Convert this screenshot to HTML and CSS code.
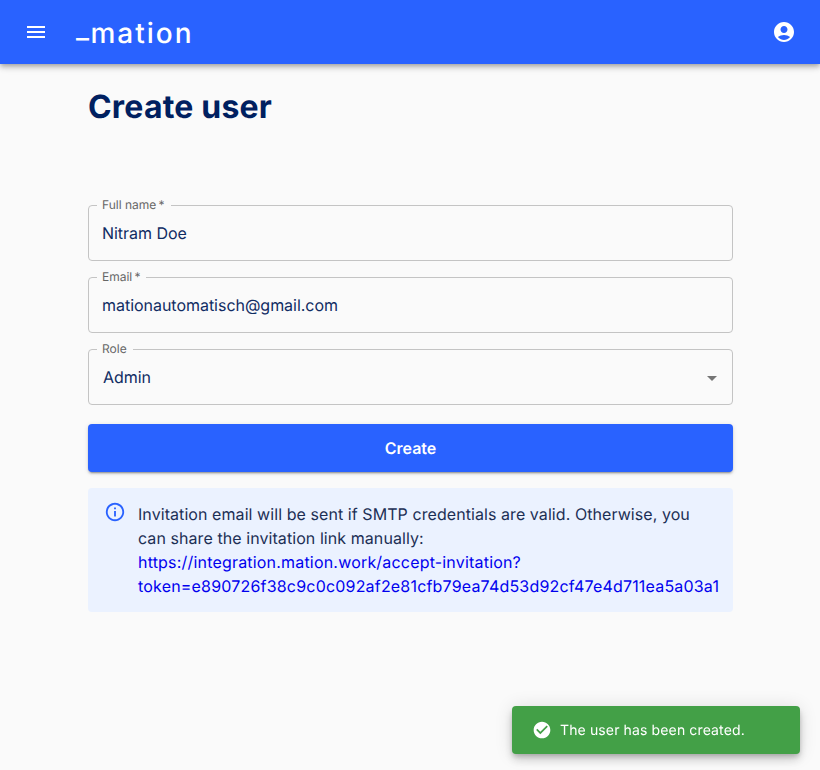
FILE: index.html
```html
<!DOCTYPE html>
<html lang="en">
<head>
    <meta charset="UTF-8">
    <title>Create user</title>
    <link rel="stylesheet" href="styles.css">
</head>
<body>
    <header class="topbar">
        <button class="icon-btn menu-btn" aria-label="Menu">
            <svg width="24" height="24" viewBox="0 0 24 24"><path d="M3 18h18v-2H3v2zm0-5h18v-2H3v2zm0-7v2h18V6H3z"/></svg>
        </button>
        <span class="logo"><span class="logo-bar">_</span>mation</span>
        <button class="icon-btn user-btn" aria-label="Account">
            <svg width="24" height="24" viewBox="0 0 24 24"><path d="M12 2C6.48 2 2 6.48 2 12s4.48 10 10 10 10-4.48 10-10S17.52 2 12 2zm0 4c1.93 0 3.5 1.57 3.5 3.5S13.93 13 12 13s-3.5-1.57-3.5-3.5S10.07 6 12 6zm0 14c-2.03 0-4.43-.82-6.14-2.88C7.55 15.8 9.68 15 12 15s4.45.8 6.14 2.12C16.43 19.18 14.03 20 12 20z"/></svg>
        </button>
    </header>

    <main class="content">
        <h1 class="title">Create user</h1>

        <form class="user-form">
            <fieldset class="field">
                <legend>Full name&thinsp;*</legend>
                <div class="value">Nitram Doe</div>
            </fieldset>
            <fieldset class="field">
                <legend>Email&thinsp;*</legend>
                <div class="value">mationautomatisch@gmail.com</div>
            </fieldset>
            <fieldset class="field select">
                <legend>Role</legend>
                <div class="value">Admin</div>
                <svg class="caret" width="24" height="24" viewBox="0 0 24 24"><path d="M7 10l5 5 5-5z"/></svg>
            </fieldset>
            <button type="button" class="submit">Create</button>
        </form>

        <div class="alert">
            <svg class="alert-icon" width="22" height="22" viewBox="0 0 24 24"><path d="M11 7h2v2h-2zm0 4h2v6h-2zm1-9C6.48 2 2 6.48 2 12s4.48 10 10 10 10-4.48 10-10S17.52 2 12 2zm0 18c-4.41 0-8-3.59-8-8s3.59-8 8-8 8 3.59 8 8-3.59 8-8 8z"/></svg>
            <div class="alert-text">
                Invitation email will be sent if SMTP credentials are valid. Otherwise, you can share the invitation link manually:
                <a href="#">https://integration.mation.work/accept-invitation?token=e890726f38c9c0c092af2e81cfb79ea74d53d92cf47e4d711ea5a03a1</a>
            </div>
        </div>
    </main>

    <div class="toast">
        <svg width="20" height="20" viewBox="0 0 24 24"><path d="M12 2C6.48 2 2 6.48 2 12s4.48 10 10 10 10-4.48 10-10S17.52 2 12 2zm-2 15l-5-5 1.41-1.41L10 14.17l7.59-7.59L19 8l-9 9z"/></svg>
        <span>The user has been created.</span>
    </div>
</body>
</html>
```

FILE: styles.css
```css
* {
    box-sizing: border-box;
}
body {
    margin: 0;
    height: 770px;
    overflow: hidden;
    background: #fafafa;
    font-family: Inter, "Liberation Sans", sans-serif;
    color: #002060;
    text-rendering: geometricPrecision;
}
.topbar {
    display: flex;
    align-items: center;
    height: 64px;
    padding: 0 24px;
    background: #2962ff;
    color: #fff;
    box-shadow: 0 2px 4px -1px rgba(0,0,0,.2), 0 4px 5px rgba(0,0,0,.14), 0 1px 10px rgba(0,0,0,.12);
}
.icon-btn {
    display: flex;
    padding: 0;
    border: none;
    background: none;
    fill: #fff;
}
.logo {
    margin: 0 0 3px 28px;
    font-size: 28px;
    font-weight: 500;
    line-height: 36px;
    letter-spacing: 2px;
}
.logo-bar {
    vertical-align: 5px;
    letter-spacing: 1.5px;
}
.user-btn {
    margin-left: auto;
}
.content {
    width: 645px;
    margin-left: 88px;
}
.title {
    margin: 23px 0 0;
    font-size: 32px;
    line-height: 40px;
    font-weight: 700;
    letter-spacing: .2px;
}
.user-form {
    display: flex;
    flex-direction: column;
    gap: 16px;
    margin-top: 78px;
}
.field {
    position: relative;
    height: 62px;
    margin: -6px 0 0;
    padding: 0 13px;
    border: 1px solid #c4c4c4;
    border-radius: 4px;
}
.field legend {
    padding: 0 6px 0 5px;
    margin-left: -5px;
    font-size: 12px;
    line-height: 12px;
    color: #666;
}
.value {
    font-size: 16px;
    line-height: 24px;
    letter-spacing: -.03px;
    margin-top: 10px;
    color: #102c63;
}
.select .value {
    padding-left: 1px;
}
.caret {
    position: absolute;
    right: 8px;
    top: 11px;
    fill: #757575;
}
.submit {
    height: 48px;
    margin-top: 3px;
    border: none;
    border-radius: 4px;
    background: #2962ff;
    color: #fff;
    font: 600 16px Inter, "Liberation Sans", sans-serif;
    text-rendering: geometricPrecision;
    box-shadow: 0 3px 1px -2px rgba(0,0,0,.2), 0 2px 2px rgba(0,0,0,.14), 0 1px 5px rgba(0,0,0,.12);
}
.alert {
    display: flex;
    gap: 12px;
    margin-top: 16px;
    padding: 14px 12px 14px 16px;
    border-radius: 4px;
    background: #ebf2ff;
}
.alert-icon {
    flex: none;
    margin-top: -1px;
    fill: #2962ff;
}
.alert-text {
    font-size: 16px;
    line-height: 24px;
    letter-spacing: .07px;
    color: #1c2f55;
    overflow-wrap: anywhere;
}
.alert-text a {
    color: #0000ee;
    letter-spacing: .19px;
    text-decoration: none;
}
.toast {
    position: fixed;
    left: 512px;
    top: 706px;
    display: flex;
    align-items: center;
    gap: 8px;
    width: 288px;
    height: 48px;
    padding: 0 20px;
    border-radius: 4px;
    background: #43a047;
    color: #fff;
    fill: #fff;
    font-size: 14px;
    letter-spacing: .13px;
    box-shadow: 0 3px 5px -1px rgba(0,0,0,.2), 0 6px 10px rgba(0,0,0,.14), 0 1px 18px rgba(0,0,0,.12);
}
```
